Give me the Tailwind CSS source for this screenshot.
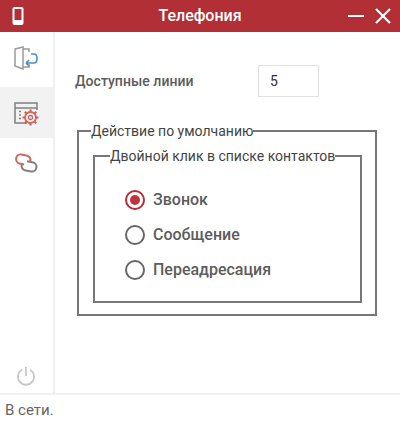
<!DOCTYPE html>
<html lang="ru">
<head>
  <meta charset="UTF-8" />
  <title>Телефония</title>
  <script src="https://cdn.jsdelivr.net/npm/@tailwindcss/browser@4"></script>
</head>
<body class="bg-white font-['Roboto',sans-serif] text-[#5c5c5c]">
  <div class="w-[400px] h-[424px] flex flex-col overflow-hidden">

    <header class="h-[32px] bg-[#b12f35] flex items-center text-white shrink-0">
      <div class="w-[36px] flex justify-center">
        <svg width="12" height="18" viewBox="0 0 12 18" fill="none">
          <rect x="1.5" y="1" width="9" height="16" rx="1" stroke="white" stroke-width="2"/>
          <rect x="1" y="13" width="10" height="4" fill="white"/>
        </svg>
      </div>
      <h1 class="flex-1 text-center text-[16px] font-medium pl-[16px]">Телефония</h1>
      <div class="w-[52px] flex items-center gap-[11px]">
        <span class="w-[16px] h-[2px] bg-white"></span>
        <svg width="16" height="16" viewBox="0 0 16 16" stroke="white" stroke-width="2.2"><path d="M1 1L15 15M15 1L1 15"/></svg>
      </div>
    </header>

    <div class="flex flex-1 min-h-0">
      <aside class="w-[55px] shrink-0 bg-white border-r-2 border-[#f0f0f0] flex flex-col items-stretch">
        <button class="h-[55px] pb-[3px] flex items-center justify-center pr-[2px]">
          <svg width="26" height="24" viewBox="0 0 26 24" fill="none">
            <path d="M2 3L10 1V23L2 20Z" stroke="#9a9a9a" stroke-width="1.5"/>
            <path d="M10 3H16V6M16 18V21H10" stroke="#9a9a9a" stroke-width="1.5"/>
            <path d="M18 8H21C25 8 25 17 21 17H13M13 17L16 14M13 17L16 20" stroke="#4a90c2" stroke-width="1.6"/>
          </svg>
        </button>
        <button class="h-[51px] pt-[2px] bg-[#f2f2f2] flex items-center justify-center pr-[2px]">
          <svg width="26" height="26" viewBox="0 0 26 26" fill="none">
            <path d="M14 22H2V2H24V9" stroke="#808080" stroke-width="1.5"/>
            <path d="M2 7H24" stroke="#808080" stroke-width="1.5"/>
            <path d="M6 10.5H8M6 14H8M6 17.5H8" stroke="#808080" stroke-width="1.5"/>
            <circle cx="17.5" cy="16.5" r="5.5" stroke="#d0675f" stroke-width="1.8"/>
            <circle cx="17.5" cy="16.5" r="2" stroke="#d0675f" stroke-width="1.3"/>
            <path d="M17.5 8.5V11M17.5 22V24.5M9.5 16.5H12M23 16.5H25.5M11.8 10.8L13.6 12.6M21.4 20.4L23.2 22.2M23.2 10.8L21.4 12.6M13.6 20.4L11.8 22.2" stroke="#d0675f" stroke-width="2.2"/>
          </svg>
        </button>
        <button class="h-[50px] flex items-center justify-center pr-[1px]">
          <svg width="26" height="20" viewBox="0 0 26 20" fill="none">
            <path d="M11 11.5L6.5 10.6A4.7 4.7 0 0 1 8.2 1.4L13.5 2.4A4.7 4.7 0 0 1 17.4 8" stroke="#d0675f" stroke-width="2"/>
            <path d="M14 8.2L19.5 9.2A4.6 4.6 0 0 1 18 18.5L12.8 17.5A4.6 4.6 0 0 1 8.8 11.5" stroke="#808080" stroke-width="2"/>
          </svg>
        </button>
        <div class="mt-auto h-[27px] flex items-start justify-center pr-[1px]">
          <svg width="20" height="20" viewBox="0 0 20 20" fill="none" stroke="#c8c8c8" stroke-width="1.8">
            <path d="M10 1V10"/>
            <path d="M6 3.8A8 8 0 1 0 14 3.8"/>
          </svg>
        </div>
      </aside>

      <main class="flex-1 pl-[22px] pr-[23px]">
        <div class="flex items-center h-[32px] mt-[33px]">
          <label class="-ml-[2px] w-[183px] text-[14px] font-medium tracking-[0.05px]">Доступные линии</label>
          <input type="text" value="5" class="w-[61px] h-[32px] border border-[#e0e0e0] pl-[11px] text-[14px] text-[#333]" />
        </div>

        <fieldset class="mt-[25px] h-[194px] border-[2px] border-[#777] px-[14px]">
          <legend class="text-[14px] text-[#444] leading-[18px] -ml-[2px]">Действие по умолчанию</legend>
          <fieldset class="mt-[7px] -mr-[1px] h-[156px] border-[2px] border-[#777]">
            <legend class="text-[14px] text-[#444] leading-[18px] ml-[15px]">Двойной клик в списке контактов</legend>
            <div class="flex flex-col gap-[15px] pl-[30px] pt-[25px]">
              <label class="flex items-center gap-[8px] h-[20px] text-[16px] font-medium">
                <span class="w-[20px] h-[20px] rounded-full border-2 border-[#b12f35] flex items-center justify-center">
                  <span class="w-[10px] h-[10px] rounded-full bg-[#c0333a]"></span>
                </span>
                Звонок
              </label>
              <label class="flex items-center gap-[8px] h-[20px] text-[16px] font-medium">
                <span class="w-[20px] h-[20px] rounded-full border-2 border-[#666]"></span>
                Сообщение
              </label>
              <label class="flex items-center gap-[8px] h-[20px] text-[16px] font-medium">
                <span class="w-[20px] h-[20px] rounded-full border-2 border-[#666]"></span>
                Переадресация
              </label>
            </div>
          </fieldset>
        </fieldset>
      </main>
    </div>

    <footer class="h-[31px] shrink-0 border-t-2 border-[#f0f0f0] pl-[5px] pt-[6px] text-[15px] text-[#666] leading-[18px]">В сети.</footer>
  </div>
</body>
</html>
